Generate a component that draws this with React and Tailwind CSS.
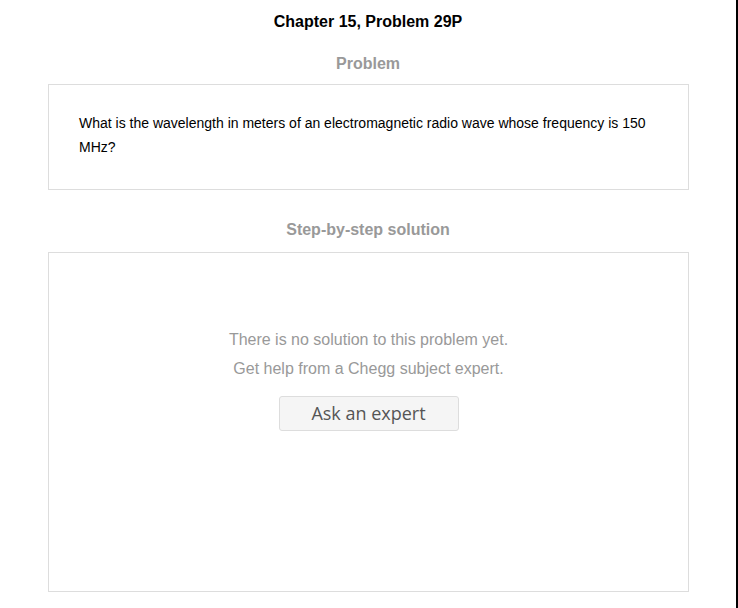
export default function App() {
  return (
    <div className="w-[738px] h-[608px] overflow-hidden bg-white border-r-2 border-black" style={{ fontFamily: '"Liberation Sans", Arial, sans-serif' }}>
      <div className="w-[736px] flex flex-col items-center">
        <h1 className="mt-[12px] text-[16px] leading-[20px] font-bold text-black">Chapter 15, Problem 29P</h1>
        <h2 className="mt-[22px] text-[16px] leading-[20px] font-bold text-[#999]">Problem</h2>
        <div className="mt-[10px] w-[641px] h-[106px] border border-[#ddd] px-[30px] pt-[26px] self-start ml-[48px]">
          <p className="text-[14px] leading-[24px] text-black">
            What is the wavelength in meters of an electromagnetic radio wave whose frequency is 150 MHz?
          </p>
        </div>
        <h2 className="mt-[30px] text-[16px] leading-[20px] font-bold text-[#999]">Step-by-step solution</h2>
        <div className="mt-[12px] w-[641px] h-[340px] border border-[#ddd] self-start ml-[48px] flex flex-col items-center pt-[72px]">
          <p className="text-[16px] leading-[29px] text-[#999]">There is no solution to this problem yet.</p>
          <p className="text-[16px] leading-[29px] text-[#999]">Get help from a Chegg subject expert.</p>
          <button className="mt-[13px] w-[180px] h-[35px] bg-[#f5f5f5] border border-[#ddd] rounded-[3px] text-[18px] text-[#555]" style={{ fontFamily: '"Open Sans", sans-serif' }}>
            Ask an expert
          </button>
        </div>
      </div>
    </div>
  );
}
